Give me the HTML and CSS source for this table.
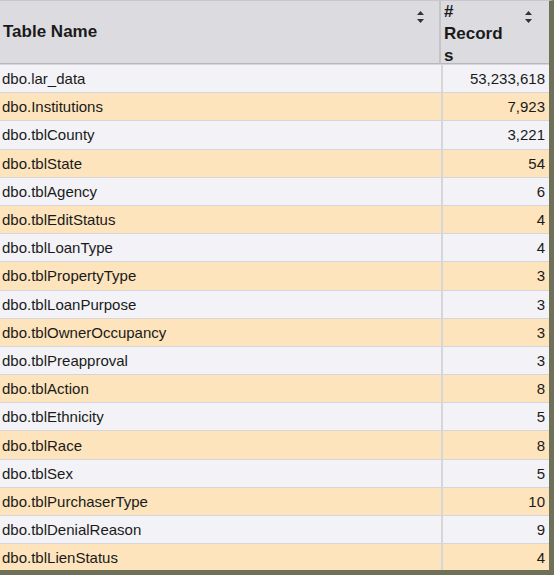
FILE: index.html
```html
<!DOCTYPE html>
<html>
<head>
<meta charset="utf-8">
<link rel="stylesheet" href="styles.css">
</head>
<body>
<div class="frame">
  <div class="grid">
    <div class="hcell hname"><span class="htext">Table Name</span><span class="sort"><svg width="9" height="14" viewBox="0 0 9 14"><path d="M4.5 1 L8 5 L1 5 Z M4.5 13 L8 9 L1 9 Z" fill="#333"/></svg></span></div>
    <div class="hcell hrec"><span class="htext">#<br>Record<br>s</span><span class="sort"><svg width="9" height="14" viewBox="0 0 9 14"><path d="M4.5 1 L8 5 L1 5 Z M4.5 13 L8 9 L1 9 Z" fill="#333"/></svg></span></div>

    <div class="cell a">dbo.lar_data</div><div class="cell a num">53,233,618</div>
    <div class="cell b">dbo.Institutions</div><div class="cell b num">7,923</div>
    <div class="cell a">dbo.tblCounty</div><div class="cell a num">3,221</div>
    <div class="cell b">dbo.tblState</div><div class="cell b num">54</div>
    <div class="cell a">dbo.tblAgency</div><div class="cell a num">6</div>
    <div class="cell b">dbo.tblEditStatus</div><div class="cell b num">4</div>
    <div class="cell a">dbo.tblLoanType</div><div class="cell a num">4</div>
    <div class="cell b">dbo.tblPropertyType</div><div class="cell b num">3</div>
    <div class="cell a">dbo.tblLoanPurpose</div><div class="cell a num">3</div>
    <div class="cell b">dbo.tblOwnerOccupancy</div><div class="cell b num">3</div>
    <div class="cell a">dbo.tblPreapproval</div><div class="cell a num">3</div>
    <div class="cell b">dbo.tblAction</div><div class="cell b num">8</div>
    <div class="cell a">dbo.tblEthnicity</div><div class="cell a num">5</div>
    <div class="cell b">dbo.tblRace</div><div class="cell b num">8</div>
    <div class="cell a">dbo.tblSex</div><div class="cell a num">5</div>
    <div class="cell b">dbo.tblPurchaserType</div><div class="cell b num">10</div>
    <div class="cell a">dbo.tblDenialReason</div><div class="cell a num">9</div>
    <div class="cell b">dbo.tblLienStatus</div><div class="cell b num">4</div>
  </div>
</div>
</body>
</html>
```

FILE: styles.css
```css
html, body {
  margin: 0;
  padding: 0;
  background: #ffffff;
}
.frame {
  width: 554px;
  height: 575px;
  box-sizing: border-box;
  border-top: 1px solid #c8c8cc;
  border-right: 5px solid #6f7058;
  border-bottom: 5px solid #6f7058;
  background: #f3f3f7;
  overflow: hidden;
}
.grid {
  display: grid;
  grid-template-columns: 441px 108px;
  grid-template-rows: 63px repeat(18, 27.2px);
  row-gap: 1px;
  background: #d6d6da;
  font-family: "Liberation Sans", Arial, sans-serif;
  font-size: 15px;
  color: #1a1a1a;
}
.hcell {
  background: #dcdce0;
  display: flex;
  justify-content: space-between;
  font-weight: bold;
  font-size: 17px;
  border-bottom: 1px solid #b8b8bc;
}
.hname {
  align-items: center;
  padding-left: 3px;
  padding-right: 14px;
  border-right: 2px solid #c4c4c8;
}
.hname .sort { align-self: flex-start; margin-top: 9px; }
.hrec {
  padding-left: 3px;
  padding-right: 16px;
  line-height: 22px;
}
.hrec .sort { margin-top: 9px; }
.sort svg { display: block; }
.cell {
  display: flex;
  align-items: center;
  padding-left: 2px;
  padding-right: 4px;
  white-space: nowrap;
}
.cell.num {
  justify-content: flex-end;
  border-left: 2px solid #d6d6da;
}
.a { background: #f3f3f7; }
.b { background: #fde4bc; }
```
